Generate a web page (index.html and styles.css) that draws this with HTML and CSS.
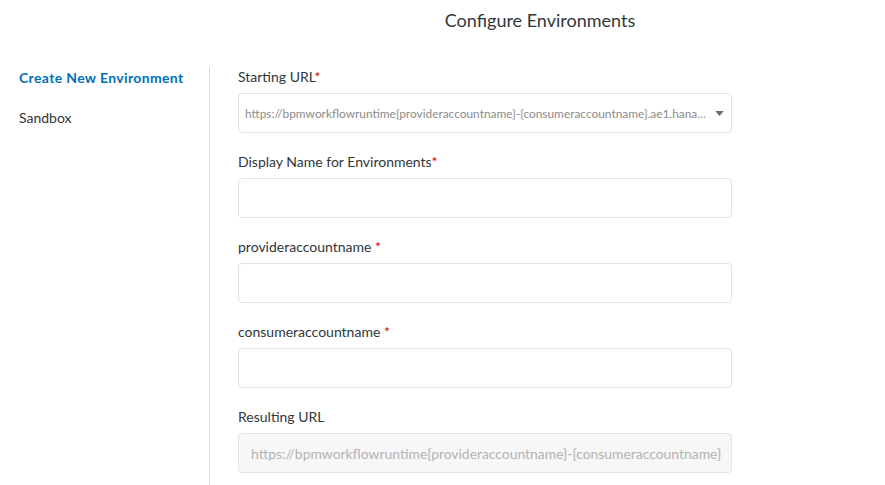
FILE: index.html
```html
<!DOCTYPE html>
<html>
<head>
<meta charset="utf-8">
<link rel="stylesheet" href="styles.css">
</head>
<body>
<div class="page">
  <h1 class="title">Configure Environments</h1>
  <div class="body">
    <nav class="nav">
      <div class="nav-item active">Create New Environment</div>
      <div class="nav-item">Sandbox</div>
    </nav>
    <div class="form">
      <div class="field">
        <label class="label">Starting URL<span class="req">*</span></label>
        <div class="input select">
          <span class="value">https://bpmworkflowruntime{provideraccountname}-{consumeraccountname}.ae1.hana...</span>
          <svg class="arrow" width="9" height="5" viewBox="0 0 10 6"><path d="M0 0 L10 0 L5 6 Z" fill="#6a6d70"/></svg>
        </div>
      </div>
      <div class="field">
        <label class="label">Display Name for Environments<span class="req">*</span></label>
        <div class="input"></div>
      </div>
      <div class="field">
        <label class="label">provideraccountname <span class="req">*</span></label>
        <div class="input"></div>
      </div>
      <div class="field">
        <label class="label">consumeraccountname <span class="req">*</span></label>
        <div class="input"></div>
      </div>
      <div class="field">
        <label class="label">Resulting URL</label>
        <div class="input readonly"><span class="value big">https://bpmworkflowruntime{provideraccountname}-{consumeraccountname}</span></div>
      </div>
    </div>
  </div>
</div>
</body>
</html>
```

FILE: styles.css
```css
html, body {
  margin: 0;
  padding: 0;
  background: #fff;
}
body {
  font-family: "Lato", "Noto Sans", "Liberation Sans", sans-serif;
  color: #32363a;
  overflow: hidden;
}
.page {
  width: 885px;
  height: 485px;
  display: flex;
  flex-direction: column;
}
.title {
  margin: 0;
  padding: 9px 0 0 195px;
  height: 67px;
  flex: none;
  box-sizing: border-box;
  text-align: center;
  font-size: 18px;
  font-weight: 400;
  line-height: 22px;
}
.body {
  display: flex;
  flex: 1;
}
.nav {
  width: 190px;
  padding-left: 19px;
  border-right: 1px solid #d9d9d9;
}
.nav-item {
  font-size: 14px;
  line-height: 20px;
  padding-top: 1px;
  height: 40px;
  box-sizing: border-box;
}
.nav-item.active {
  color: #0070b8;
  font-weight: 700;
  letter-spacing: 0.35px;
}
.form {
  padding-left: 28px;
  width: 494px;
}
.field {
  height: 85px;
}
.label {
  display: block;
  font-size: 14px;
  line-height: 20px;
  height: 20px;
  margin-bottom: 6px;
}
.req {
  color: #e00000;
}
.input {
  height: 40px;
  box-sizing: border-box;
  border: 1px solid #e3e3e3;
  border-radius: 4px;
  background: #fff;
  display: flex;
  align-items: center;
  padding: 0 7px 0 6px;
}
.select {
  justify-content: space-between;
}
.value {
  font-size: 11.9px;
  color: #8c8c8c;
  white-space: nowrap;
  overflow: hidden;
}
.value.big {
  font-size: 13.9px;
  color: #b3b3b3;
  padding-left: 6px;
}
.readonly {
  background: #f7f7f7;
}
.arrow {
  flex: none;
  margin-left: 8px;
}
```
